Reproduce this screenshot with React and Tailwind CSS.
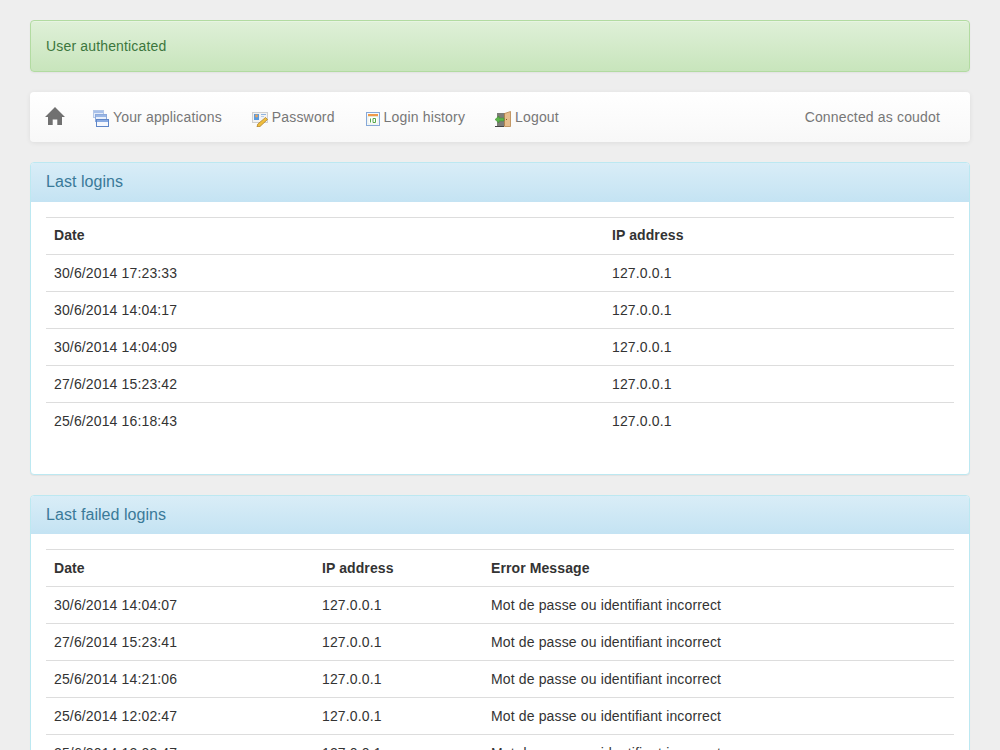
import React from "react";

const lastLogins = [
  ["30/6/2014 17:23:33", "127.0.0.1"],
  ["30/6/2014 14:04:17", "127.0.0.1"],
  ["30/6/2014 14:04:09", "127.0.0.1"],
  ["27/6/2014 15:23:42", "127.0.0.1"],
  ["25/6/2014 16:18:43", "127.0.0.1"],
];

const failedLogins = [
  ["30/6/2014 14:04:07", "127.0.0.1"],
  ["27/6/2014 15:23:41", "127.0.0.1"],
  ["25/6/2014 14:21:06", "127.0.0.1"],
  ["25/6/2014 12:02:47", "127.0.0.1"],
  ["25/6/2014 12:02:47", "127.0.0.1"],
];

const errorMessage = "Mot de passe ou identifiant incorrect";

function HomeIcon() {
  return (
    <svg width="20" height="18" viewBox="0 0 20 18" className="-mt-[2px] block">
      <path d="M10 0 L20 10 L17 10 L17 18 L12.3 18 L12.3 12.5 L7.7 12.5 L7.7 18 L3 18 L3 10 L0 10 Z" fill="#707070" />
    </svg>
  );
}

function AppsIcon() {
  return (
    <svg width="16" height="17" viewBox="0 0 16 17" className="block">
      <rect x="0.5" y="0.5" width="10" height="7" fill="#e4ecf9" stroke="#b4c8e8" />
      <rect x="1" y="1" width="9" height="2" fill="#a9c1ea" />
      <rect x="2.5" y="4.5" width="11" height="7" fill="#e9f0fb" stroke="#8eaadb" />
      <rect x="3" y="5" width="10" height="2" fill="#9ab7e6" />
      <rect x="3.5" y="9.5" width="12" height="7" fill="#f6f8fd" stroke="#5f86c8" />
      <rect x="4" y="10" width="11" height="2" fill="#8aabe2" />
    </svg>
  );
}

function PasswordIcon() {
  return (
    <svg width="16" height="15" viewBox="0 0 16 15" className="block">
      <rect x="0.5" y="0.5" width="15" height="10" fill="#f3f3f3" stroke="#cfcfcf" />
      <rect x="2" y="2" width="5" height="6" fill="#5b9bdc" />
      <circle cx="4.5" cy="4" r="1.4" fill="#e8a25c" />
      <rect x="9" y="2" width="5" height="1" fill="#8fb4e0" />
      <rect x="9" y="4" width="3" height="1" fill="#b5cbe6" />
      <path d="M13.5 5.5 L15.5 7.5 L8 14.5 L5 15 L5.8 12 Z" fill="#f0bf3e" stroke="#a8761c" strokeWidth="0.7" />
    </svg>
  );
}

function CalendarIcon() {
  return (
    <svg width="14" height="14" viewBox="0 0 14 14" className="mb-[1px] ml-[1px] block">
      <rect x="0.5" y="0.5" width="13" height="13" fill="#f7fafe" stroke="#86a8d8" />
      <rect x="2" y="2" width="10" height="2.5" fill="#ef9a4a" />
      <rect x="2" y="4.5" width="10" height="7.5" fill="#fff" stroke="#d6e2d0" strokeWidth="0.5" />
      <path d="M4.5 6.5 V10.5 M7 6.5 H9.5 V10.5 H7 Z" fill="none" stroke="#58a84a" strokeWidth="1" />
    </svg>
  );
}

function LogoutIcon() {
  return (
    <svg width="16" height="16" viewBox="0 0 16 16" className="block">
      <rect x="2" y="2" width="8" height="13" fill="#7d7d78" />
      <path d="M9.5 2.5 L15.5 0.5 L15.5 15.5 L9.5 15.5 Z" fill="#e6bd8c" stroke="#b07a3c" strokeWidth="0.7" />
      <rect x="11" y="8" width="1" height="1" fill="#8a5a20" />
      <path d="M0 8.5 L4 5 V7 H9 V10 H4 V12 Z" fill="#5cb54a" stroke="#3e8a30" strokeWidth="0.5" />
      <rect x="0" y="15" width="9" height="1" fill="#444" />
    </svg>
  );
}

function NavLink({ icon, label }) {
  return (
    <a href="#" className="flex items-end gap-[4px] text-[#777777]">
      {icon}
      <span>{label}</span>
    </a>
  );
}

function Panel({ title, headingClass, children }) {
  return (
    <div className="mb-5 rounded border border-[#bce8f1] bg-white shadow-[0_1px_1px_rgba(0,0,0,0.05)]">
      <div className={`${headingClass} rounded-t-[3px] bg-gradient-to-b from-[#d9edf7] to-[#c4e3f3] px-[15px] pt-[9px] text-[16px] leading-[20px] tracking-[0.05px] text-[#3a7a99]`}>
        {title}
      </div>
      <div className="p-[15px]">{children}</div>
    </div>
  );
}

function LoginTable({ columns, rows, colClasses, tableClass, headClass }) {
  return (
    <table className={`${tableClass} w-full table-fixed border-collapse`}>
      <thead>
        <tr>
          {columns.map((col, i) => (
            <th key={col} className={`h-[37px] border-y border-[#dddddd] px-2 text-left font-bold tracking-[0.1px] ${headClass} ${colClasses[i]}`}>
              {col}
            </th>
          ))}
        </tr>
      </thead>
      <tbody>
        {rows.map((row, r) => (
          <tr key={r}>
            {row.map((cell, i) => (
              <td key={i} className={`h-[37px] px-2 ${r === 0 ? "" : "border-t border-[#dddddd]"}`}>
                {cell}
              </td>
            ))}
          </tr>
        ))}
      </tbody>
    </table>
  );
}

export default function App() {
  return (
    <div className="h-screen overflow-hidden bg-[#eeeeee] px-[30px] pt-5 font-['Liberation_Sans',Arial,sans-serif] text-[14px] leading-[20px] tracking-[0.14px] text-[#333333]">
      <div className="mb-5 h-[52px] rounded border border-[#b2dba1] bg-gradient-to-b from-[#dff0d8] to-[#c8e5bc] px-[15px] pt-[15px] tracking-[0.16px] text-[#3c763d] shadow-[inset_0_1px_0_rgba(255,255,255,0.25),0_1px_2px_rgba(0,0,0,0.05)]">
        User authenticated
      </div>

      <nav className="mb-5 flex h-[50px] items-center rounded bg-gradient-to-b from-white to-[#f8f8f8] pr-[30px] pl-[15px] tracking-[0.16px] shadow-[0_1px_5px_rgba(0,0,0,0.075)]">
        <HomeIcon />
        <div className="ml-[28px] flex items-end gap-[30px]">
          <NavLink icon={<AppsIcon />} label="Your applications" />
          <NavLink icon={<PasswordIcon />} label="Password" />
          <NavLink icon={<CalendarIcon />} label="Login history" />
          <NavLink icon={<LogoutIcon />} label="Logout" />
        </div>
        <span className="ml-auto text-[#777777]">Connected as coudot</span>
      </nav>

      <Panel title="Last logins" headingClass="h-[39px]">
        <LoginTable columns={["Date", "IP address"]} rows={lastLogins} colClasses={["w-[558px]", ""]} tableClass="mb-[19px]" headClass="pb-[2px]" />
      </Panel>

      <Panel title="Last failed logins" headingClass="h-[38px]">
        <LoginTable
          columns={["Date", "IP address", "Error Message"]}
          rows={failedLogins.map((row) => [...row, errorMessage])}
          colClasses={["w-[268px]", "w-[169px]", ""]}
          tableClass="mb-5"
          headClass=""
        />
      </Panel>
    </div>
  );
}
